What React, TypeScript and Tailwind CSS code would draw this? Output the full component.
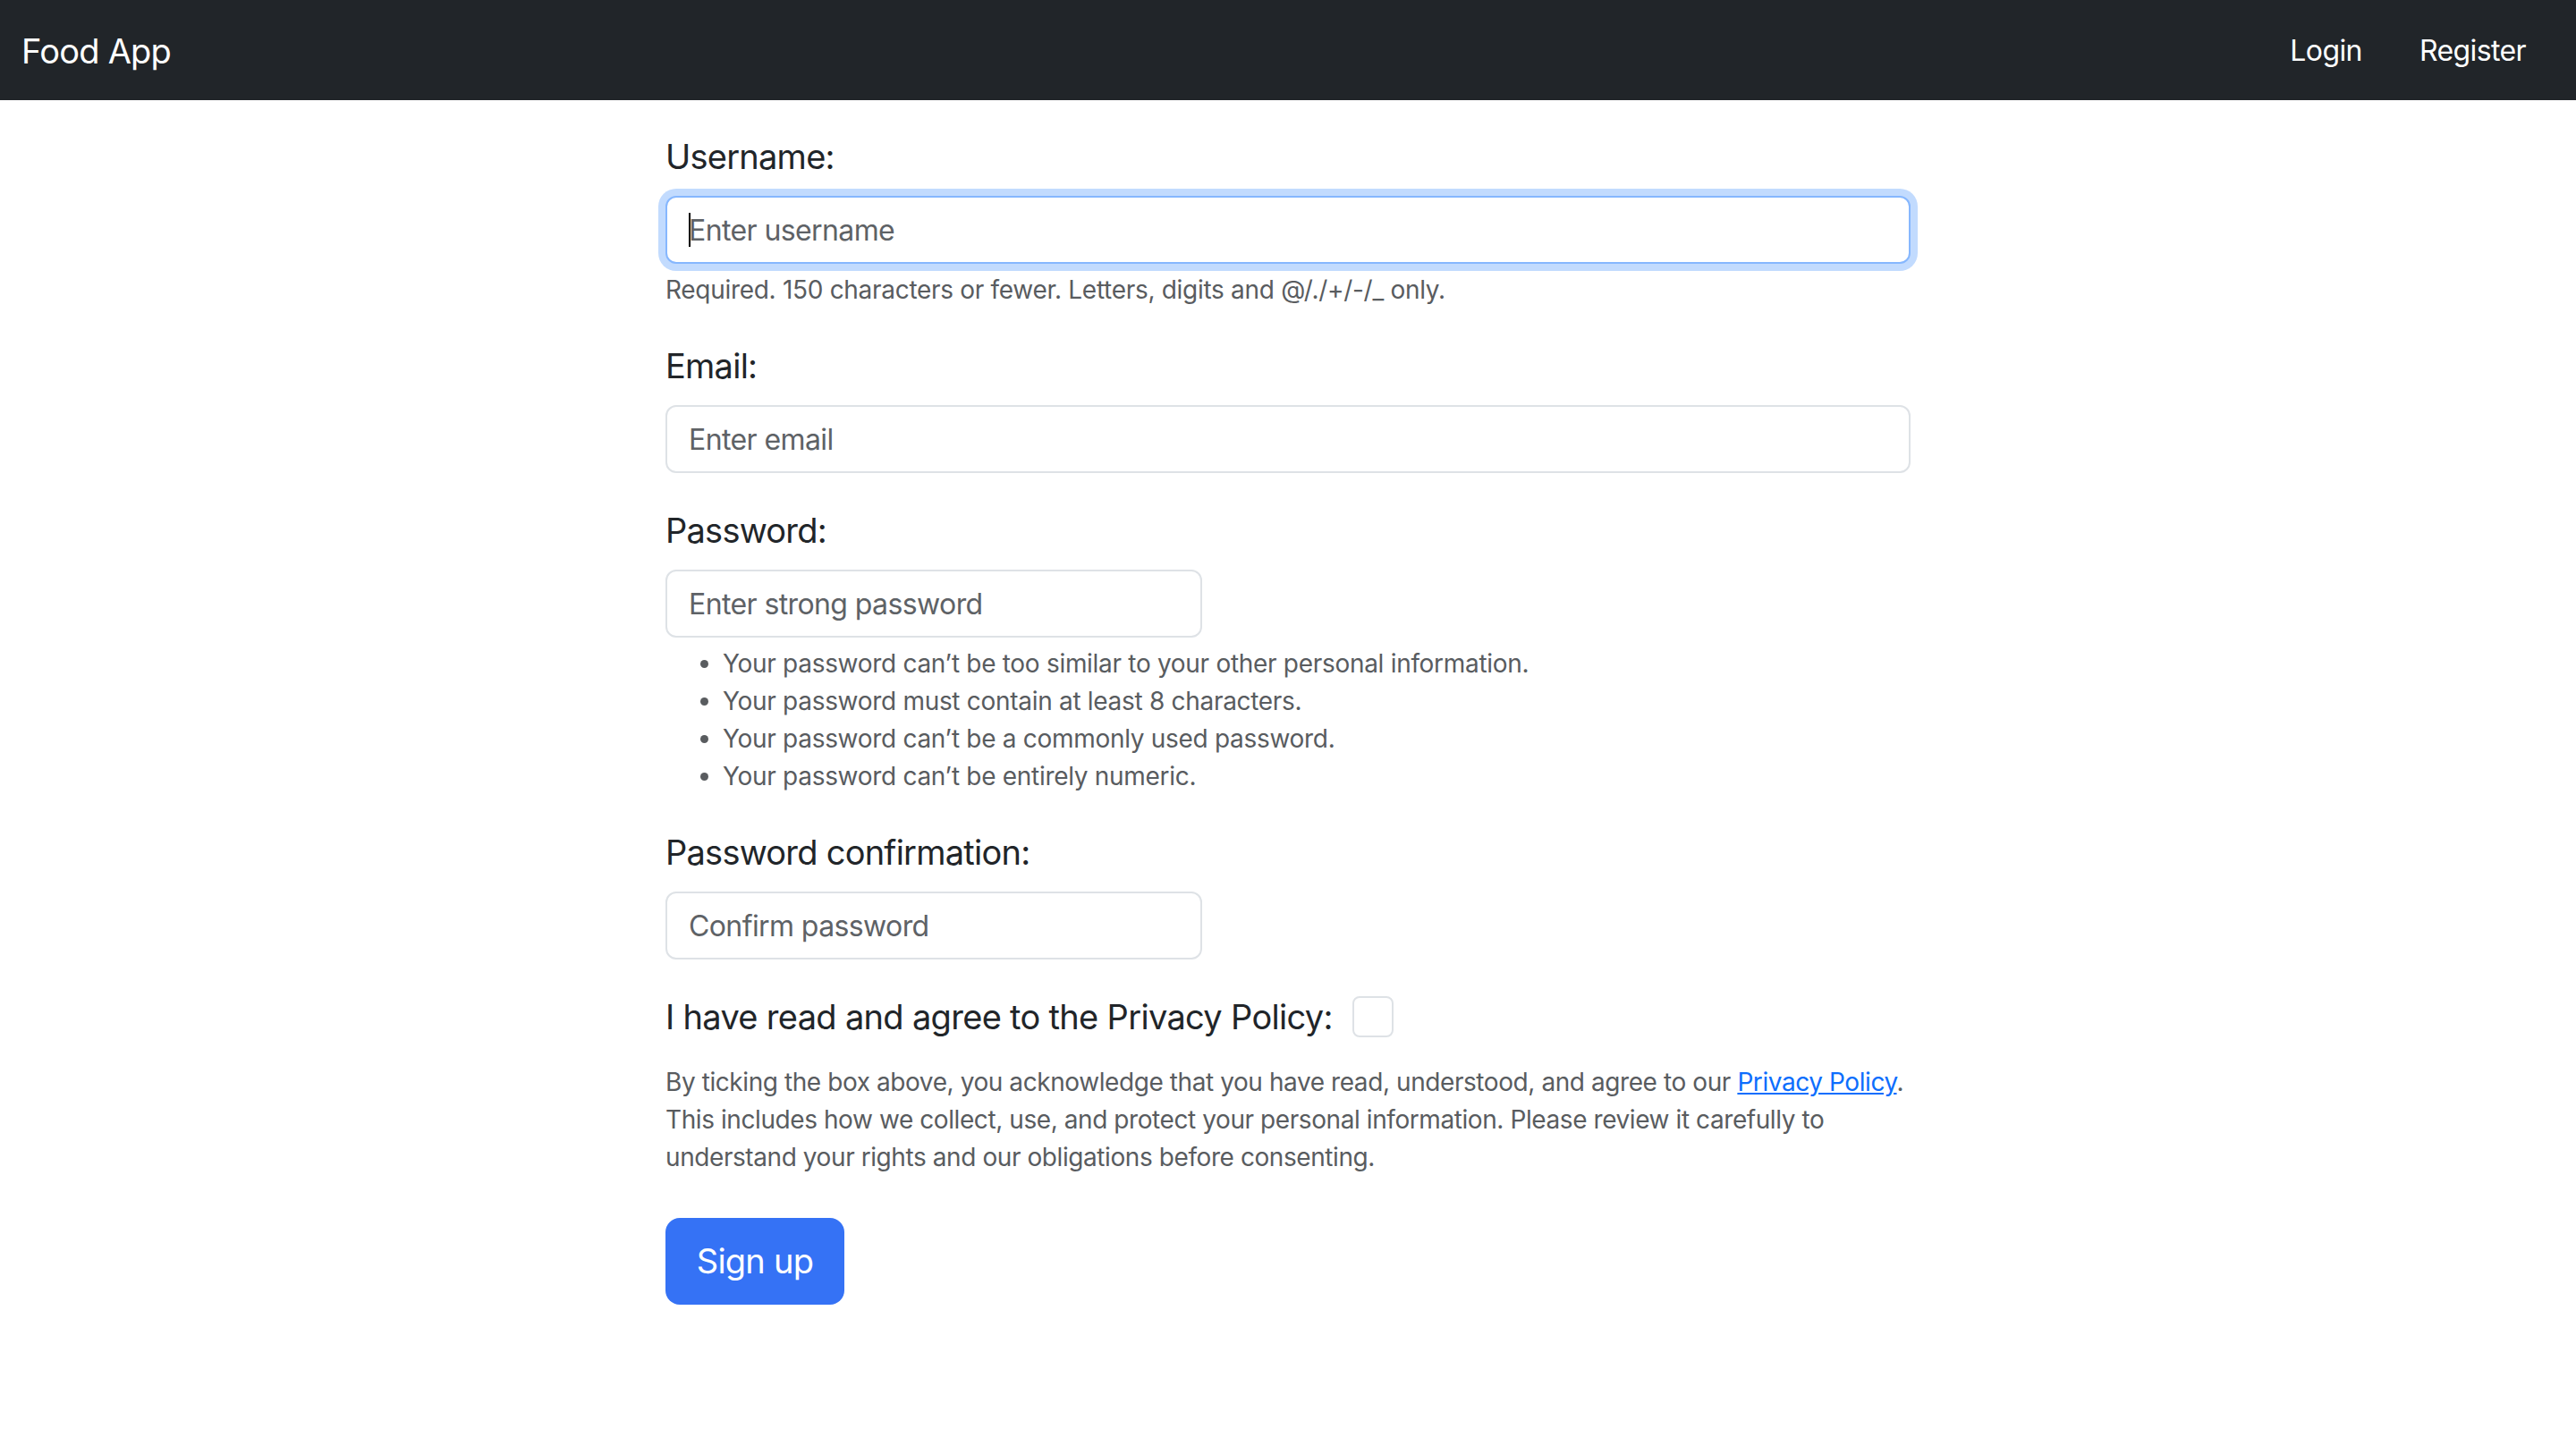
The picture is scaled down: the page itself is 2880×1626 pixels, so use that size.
import React from 'react'

const rules = [
  'Your password can’t be too similar to your other personal information.',
  'Your password must contain at least 8 characters.',
  'Your password can’t be a commonly used password.',
  'Your password can’t be entirely numeric.',
]

function Label({ children }: { children: React.ReactNode }) {
  return (
    <label className="block text-[38px] tracking-[-0.02em] leading-[60px] text-[#212529] mb-[14px]">
      {children}
    </label>
  )
}

const inputCls =
  'h-[76px] px-[24px] text-[32px] tracking-[-0.6px] text-[#212529] placeholder:text-[#5e6266] bg-white border-2 rounded-[12px] outline-none'

export default function App() {
  return (
    <div className="min-h-screen bg-white font-['Inter','Liberation_Sans',sans-serif]">
      <nav className="h-[112px] bg-[#212529] flex items-center justify-between px-[24px] pt-[2px]">
        <a href="#" className="text-[38px] tracking-[-0.02em] text-white">
          Food App
        </a>
        <div className="flex">
          <a href="#" className="px-[32px] text-[32px] tracking-[-0.6px] text-white">
            Login
          </a>
          <a href="#" className="px-[32px] text-[32px] tracking-[-0.6px] text-white">
            Register
          </a>
        </div>
      </nav>

      <main className="w-[1392px] mx-auto pt-[33px] pb-[80px]">
        <div className="mb-[34px]">
          <Label>Username:</Label>
          <div className="relative">
            <input
              type="text"
              placeholder="Enter username"
              className={`w-full border-[#86b7fe] shadow-[0_0_0_8px_rgba(13,110,253,0.25)] ${inputCls}`}
            />
            <span className="absolute left-[26px] top-[19px] w-[2px] h-[38px] bg-black" />
          </div>
          <p className="mt-[8px] text-[28px] tracking-[-0.3px] leading-[42px] text-[#595c5f]">
            Required. 150 characters or fewer. Letters, digits and @/./+/-/_ only.
          </p>
        </div>

        <div className="mb-[34px]">
          <Label>Email:</Label>
          <input type="email" placeholder="Enter email" className={`w-full border-[#dee2e6] ${inputCls}`} />
        </div>

        <div className="mb-[34px]">
          <Label>Password:</Label>
          <input
            type="password"
            placeholder="Enter strong password"
            className={`w-[600px] border-[#dee2e6] ${inputCls}`}
          />
          <ul className="mt-[8px] pl-[64px] list-disc text-[28px] tracking-[-0.3px] leading-[42px] text-[#595c5f]">
            {rules.map((r) => (
              <li key={r}>{r}</li>
            ))}
          </ul>
        </div>

        <div className="mb-[31px]">
          <Label>Password confirmation:</Label>
          <input
            type="password"
            placeholder="Confirm password"
            className={`w-[600px] border-[#dee2e6] ${inputCls}`}
          />
        </div>

        <div className="flex items-center gap-[22px] h-[66px]">
          <label className="text-[38px] tracking-[-0.018em] leading-[66px] text-[#212529]">
            I have read and agree to the Privacy Policy:
          </label>
          <input
            type="checkbox"
            className="appearance-none w-[46px] h-[46px] border-2 border-[#dee2e6] rounded-[8px] bg-white"
          />
        </div>

        <p className="mt-[19px] text-[28px] tracking-[-0.42px] leading-[42px] text-[#595c5f]">
          <span className="block whitespace-nowrap">
            By ticking the box above, you acknowledge that you have read, understood, and agree to our{' '}
            <a href="#" className="text-[#0d6efd] underline">
              Privacy Policy
            </a>
            .
          </span>
          <span className="block whitespace-nowrap">
            This includes how we collect, use, and protect your personal information. Please review it carefully to
          </span>
          <span className="block whitespace-nowrap">
            understand your rights and our obligations before consenting.
          </span>
        </p>

        <button className="mt-[47px] h-[97px] w-[200px] bg-[#3572f5] text-white text-[38px] tracking-[-0.02em] rounded-[16px]">
          Sign up
        </button>
      </main>
    </div>
  )
}
